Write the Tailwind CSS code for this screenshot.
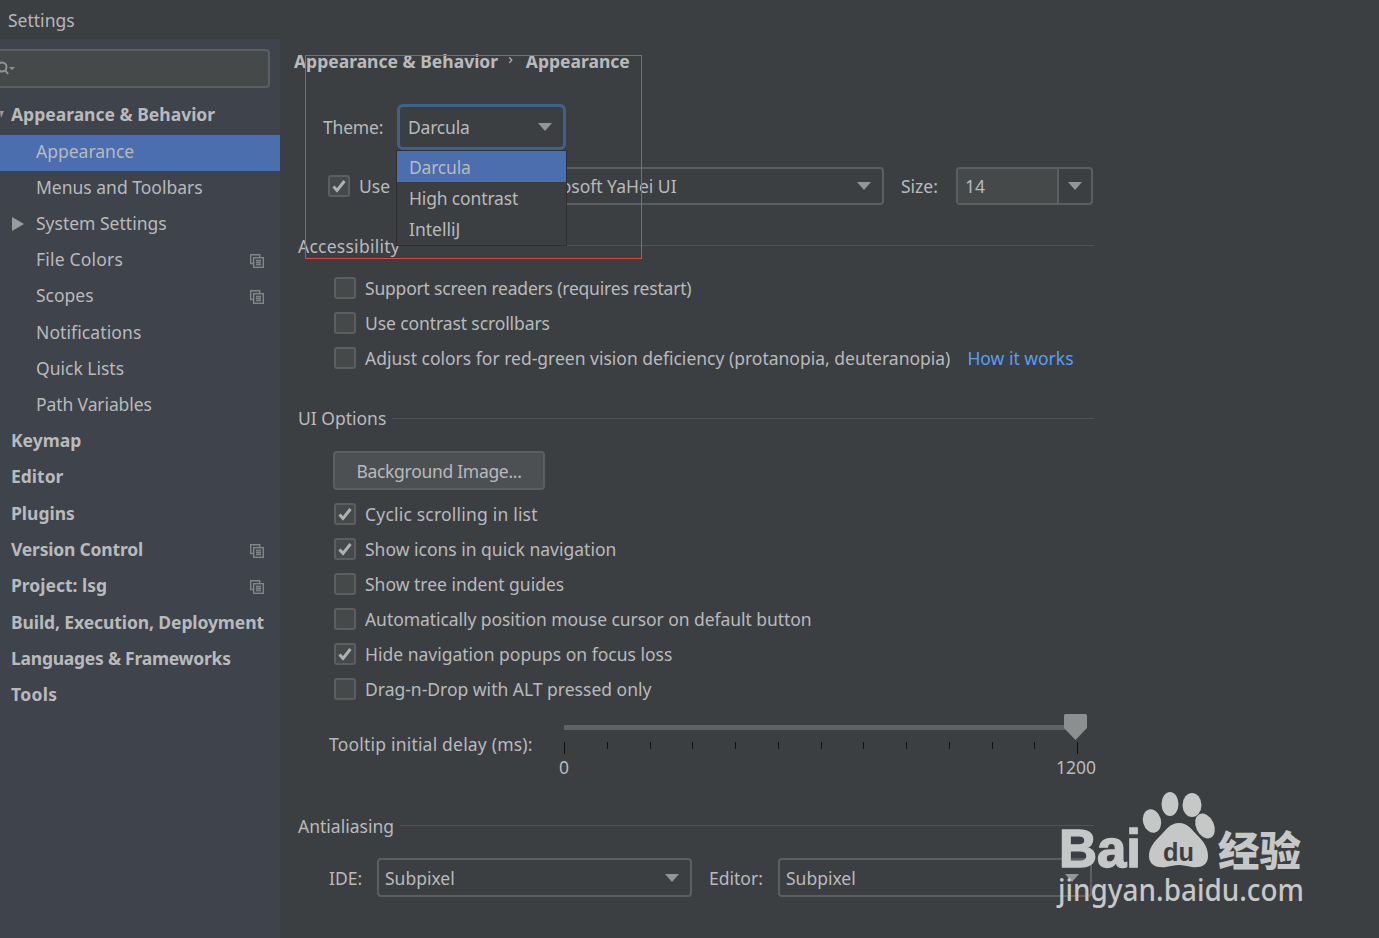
<!DOCTYPE html>
<html>
<head>
<meta charset="utf-8">
<script src="https://cdn.jsdelivr.net/npm/@tailwindcss/browser@4"></script>
</head>
<body class="m-0 bg-[#3c3f41]">
<div class="relative w-[1379px] h-[938px] overflow-hidden bg-[#3c3f41] text-[#b8babb] text-[17.5px] font-['Noto_Sans',sans-serif] leading-[24px]">
  <div class="h-[39px] pl-2 flex items-center text-[#b4b7b8]">Settings</div>
  <div class="flex h-[899px]">
    <!-- sidebar -->
    <aside class="w-[280px] shrink-0 bg-[#3e434c] pt-[10px] overflow-hidden">
      <div class="ml-[-10px] w-[280px] h-[39px] rounded-[4px] border-2 border-[#5c5f60] bg-[#45494a] flex items-center pl-[5px]">
        <svg width="20" height="16" viewBox="0 0 20 16"><circle cx="5" cy="6" r="4.5" fill="none" stroke="#8f9395" stroke-width="2"/><path d="M8 9l3 4" stroke="#8f9395" stroke-width="2"/><path d="M12 6h6l-3 3z" fill="#8f9395"/></svg>
      </div>
      <div class="mt-[9px] flex flex-col [&>div]:pb-[5px]">
        <div class="h-[38px] pl-[11px] flex items-center font-bold relative"><svg class="absolute left-0 top-[14px]" width="4" height="7" viewBox="0 0 4 7"><path d="M0 0h4L1 7z" fill="#9a9c9e"/></svg>Appearance &amp; Behavior</div>
        <div class="h-[36px] pl-[36px] flex items-center bg-[#4b6eaf]">Appearance</div>
        <div class="h-[36px] pl-[36px] flex items-center">Menus and Toolbars</div>
        <div class="h-[36px] pl-[12px] flex items-center"><svg class="mr-[12px] relative top-[1px]" width="12" height="14" viewBox="0 0 12 14"><path d="M0 0l12 7-12 7z" fill="#9a9c9e"/></svg>System Settings</div>
        <div class="h-[36px] pl-[36px] pr-[16px] flex items-center justify-between"><span class="tracking-[0.2px]">File Colors</span><svg class="relative top-[2px]" width="14" height="14" viewBox="0 0 14 14" fill="none" stroke="#81868a" stroke-width="1.4"><path d="M3.5 9.5H.7V.7h9v3"/><rect x="3.7" y="3.7" width="9.6" height="9.6"/><path d="M6 6.5h5M6 8.5h5M6 10.5h5"/></svg></div>
        <div class="h-[37px] pl-[36px] pr-[16px] flex items-center justify-between">Scopes<svg class="relative top-[2px]" width="14" height="14" viewBox="0 0 14 14" fill="none" stroke="#81868a" stroke-width="1.4"><path d="M3.5 9.5H.7V.7h9v3"/><rect x="3.7" y="3.7" width="9.6" height="9.6"/><path d="M6 6.5h5M6 8.5h5M6 10.5h5"/></svg></div>
        <div class="h-[36px] pl-[36px] flex items-center tracking-[0.1px]">Notifications</div>
        <div class="h-[36px] pl-[36px] flex items-center">Quick Lists</div>
        <div class="h-[36px] pl-[36px] flex items-center tracking-[-0.1px]">Path Variables</div>
        <div class="h-[36px] pl-[11px] flex items-center font-bold">Keymap</div>
        <div class="h-[37px] pl-[11px] flex items-center font-bold">Editor</div>
        <div class="h-[36px] pl-[11px] flex items-center font-bold">Plugins</div>
        <div class="h-[36px] pl-[11px] pr-[16px] flex items-center justify-between font-bold"><span class="tracking-[-0.2px]">Version Control</span><svg class="relative top-[2px]" width="14" height="14" viewBox="0 0 14 14" fill="none" stroke="#81868a" stroke-width="1.4"><path d="M3.5 9.5H.7V.7h9v3"/><rect x="3.7" y="3.7" width="9.6" height="9.6"/><path d="M6 6.5h5M6 8.5h5M6 10.5h5"/></svg></div>
        <div class="h-[37px] pl-[11px] pr-[16px] flex items-center justify-between font-bold">Project: lsg<svg class="relative top-[2px]" width="14" height="14" viewBox="0 0 14 14" fill="none" stroke="#81868a" stroke-width="1.4"><path d="M3.5 9.5H.7V.7h9v3"/><rect x="3.7" y="3.7" width="9.6" height="9.6"/><path d="M6 6.5h5M6 8.5h5M6 10.5h5"/></svg></div>
        <div class="h-[36px] pl-[11px] flex items-center font-bold whitespace-nowrap tracking-[-0.1px]">Build, Execution, Deployment</div>
        <div class="h-[36px] pl-[11px] flex items-center font-bold tracking-[-0.25px]">Languages &amp; Frameworks</div>
        <div class="h-[36px] pl-[11px] flex items-center font-bold tracking-[0.3px]">Tools</div>
      </div>
    </aside>
    <!-- main -->
    <main class="w-[800px] shrink-0 ml-[14px] flex flex-col">
      <div class="h-[24px] mt-[10px] flex items-center font-bold whitespace-nowrap">Appearance &amp; Behavior<span class="mx-[10px] text-[15px] font-normal relative top-[-3px]">›</span><span class="ml-[3px]">Appearance</span></div>
      <!-- theme -->
      <div class="mt-[31px] h-[46px] pl-[29px] flex items-center">
        <span class="w-[74px] tracking-[-0.2px]">Theme:</span>
        <div class="w-[169px] h-[46px] rounded-[6px] border-[3px] border-[#3e6389] flex items-center justify-between pl-[8px] pr-[11px] relative"><span class="tracking-[-0.2px]">Darcula</span><svg width="14" height="8" viewBox="0 0 14 8"><path d="M0 0h14L7 8z" fill="#939596"/></svg></div>
      </div>
      <!-- use row -->
      <div class="mt-[17px] h-[38px] flex items-center relative">
        <div class="ml-[34px] w-[22px] h-[22px] rounded-[3px] border-2 border-[#5c5f60] bg-[#45494a] flex items-center justify-center"><svg width="16" height="14" viewBox="0 0 16 14"><path d="M2.5 7.5l3.5 4L13.5 2" fill="none" stroke="#aeb0b1" stroke-width="3"/></svg></div>
        <span class="ml-[9px] w-[220px]">Use</span>
        <div class="absolute left-[220px] w-[370px] h-[38px] rounded-[4px] border-2 border-[#5c5f60] flex items-center justify-between pl-[9px] pr-[11px]"><span class="whitespace-nowrap">Microsoft YaHei UI</span><svg width="14" height="8" viewBox="0 0 14 8"><path d="M0 0h14L7 8z" fill="#939596"/></svg></div>
        <span class="absolute left-[607px]">Size:</span>
        <div class="absolute left-[662px] w-[137px] h-[38px] rounded-[4px] border-2 border-[#5c5f60] flex overflow-hidden">
          <div class="w-[101px] bg-[#45494a] border-r-2 border-[#5c5f60] pl-[7px] flex items-center">14</div>
          <div class="flex-1 flex items-center justify-center"><svg width="14" height="8" viewBox="0 0 14 8"><path d="M0 0h14L7 8z" fill="#939596"/></svg></div>
        </div>
      </div>
      <!-- accessibility -->
      <div class="mt-[29px] h-[24px] pl-[4px] flex items-center gap-[8px] leading-none"><span class="whitespace-nowrap relative top-[1px] tracking-[0.25px]">Accessibility</span><div class="flex-1 h-px bg-[#505355] relative top-[-1px]"></div></div>
      <div class="mt-[18px] flex flex-col gap-[11px] pl-[40px]">
        <div class="h-[24px] flex items-center gap-[9px]"><div class="w-[22px] h-[22px] rounded-[3px] border-2 border-[#5c5f60] bg-[#45494a]"></div><span class="tracking-[-0.2px]">Support screen readers (requires restart)</span></div>
        <div class="h-[24px] flex items-center gap-[9px]"><div class="w-[22px] h-[22px] rounded-[3px] border-2 border-[#5c5f60] bg-[#45494a]"></div><span class="tracking-[-0.1px]">Use contrast scrollbars</span></div>
        <div class="h-[24px] flex items-center gap-[9px] whitespace-nowrap"><div class="w-[22px] h-[22px] rounded-[3px] border-2 border-[#5c5f60] bg-[#45494a]"></div>Adjust colors for red-green vision deficiency (protanopia, deuteranopia)<span class="ml-[8px] text-[#589df6]">How it works</span></div>
      </div>
      <!-- UI options -->
      <div class="mt-[36px] h-[24px] pl-[4px] flex items-center gap-[6px]"><span>UI Options</span><div class="flex-1 h-px bg-[#505355]"></div></div>
      <div class="mt-[21px] ml-[39px] w-[212px] h-[39px] rounded-[4px] border-2 border-[#5c5f60] bg-[#4c5052] flex items-center justify-center tracking-[-0.3px]">Background Image...</div>
      <div class="mt-[12px] flex flex-col gap-[11px] pl-[40px]">
        <div class="h-[24px] flex items-center gap-[9px]"><div class="w-[22px] h-[22px] rounded-[3px] border-2 border-[#5c5f60] bg-[#45494a] flex items-center justify-center"><svg width="16" height="14" viewBox="0 0 16 14"><path d="M2.5 7.5l3.5 4L13.5 2" fill="none" stroke="#aeb0b1" stroke-width="3"/></svg></div><span class="tracking-[0.2px]">Cyclic scrolling in list</span></div>
        <div class="h-[24px] flex items-center gap-[9px]"><div class="w-[22px] h-[22px] rounded-[3px] border-2 border-[#5c5f60] bg-[#45494a] flex items-center justify-center"><svg width="16" height="14" viewBox="0 0 16 14"><path d="M2.5 7.5l3.5 4L13.5 2" fill="none" stroke="#aeb0b1" stroke-width="3"/></svg></div>Show icons in quick navigation</div>
        <div class="h-[24px] flex items-center gap-[9px]"><div class="w-[22px] h-[22px] rounded-[3px] border-2 border-[#5c5f60] bg-[#45494a]"></div>Show tree indent guides</div>
        <div class="h-[24px] flex items-center gap-[9px]"><div class="w-[22px] h-[22px] rounded-[3px] border-2 border-[#5c5f60] bg-[#45494a]"></div><span class="tracking-[-0.06px]">Automatically position mouse cursor on default button</span></div>
        <div class="h-[24px] flex items-center gap-[9px]"><div class="w-[22px] h-[22px] rounded-[3px] border-2 border-[#5c5f60] bg-[#45494a] flex items-center justify-center"><svg width="16" height="14" viewBox="0 0 16 14"><path d="M2.5 7.5l3.5 4L13.5 2" fill="none" stroke="#aeb0b1" stroke-width="3"/></svg></div>Hide navigation popups on focus loss</div>
        <div class="h-[24px] flex items-center gap-[9px]"><div class="w-[22px] h-[22px] rounded-[3px] border-2 border-[#5c5f60] bg-[#45494a]"></div>Drag-n-Drop with ALT pressed only</div>
      </div>
      <!-- slider -->
      <div class="mt-[15px] ml-[35px] flex">
        <span class="w-[235px] mt-[16px] shrink-0 whitespace-nowrap h-[24px] tracking-[0.2px]">Tooltip initial delay (ms):</span>
        <div class="w-[514px] flex flex-col">
          <div class="h-[26px] flex items-center relative">
            <div class="w-[502px] h-[5px] bg-[#616263] relative top-[-2px]"></div>
            <svg class="absolute left-[500px] top-[-2px]" width="23" height="26" viewBox="0 0 23 26"><path d="M0 1.5Q0 0 1.5 0h20Q23 0 23 1.5V14L11.5 26 0 14z" fill="#8b8f90"/></svg>
          </div>
          <div class="h-[12px] flex justify-between items-start">
            <div class="w-px h-[12px] bg-[#111]"></div><div class="w-px h-[7px] bg-[#111]"></div><div class="w-px h-[7px] bg-[#111]"></div><div class="w-px h-[7px] bg-[#111]"></div><div class="w-px h-[7px] bg-[#111]"></div><div class="w-px h-[7px] bg-[#111]"></div><div class="w-px h-[7px] bg-[#111]"></div><div class="w-px h-[7px] bg-[#111]"></div><div class="w-px h-[7px] bg-[#111]"></div><div class="w-px h-[7px] bg-[#111]"></div><div class="w-px h-[7px] bg-[#111]"></div><div class="w-px h-[7px] bg-[#111]"></div><div class="w-px h-[12px] bg-[#111]"></div>
          </div>
          <div class="mt-[1px] h-[24px] flex justify-between ml-[-5px] mr-[-18px]"><span>0</span><span>1200</span></div>
        </div>
      </div>
      <!-- antialiasing -->
      <div class="mt-[35px] h-[24px] pl-[4px] flex items-center gap-[6px]"><span>Antialiasing</span><div class="flex-1 h-px bg-[#505355] relative top-[-1px]"></div></div>
      <div class="mt-[20px] h-[39px] pl-[35px] flex items-center">
        <span class="w-[48px]">IDE:</span>
        <div class="w-[315px] h-[39px] rounded-[4px] border-2 border-[#5c5f60] flex items-center justify-between pl-[6px] pr-[11px]">Subpixel<svg width="14" height="8" viewBox="0 0 14 8"><path d="M0 0h14L7 8z" fill="#939596"/></svg></div>
        <span class="ml-[17px] w-[69px]">Editor:</span>
        <div class="w-[314px] h-[39px] rounded-[4px] border-2 border-[#5c5f60] flex items-center justify-between pl-[6px] pr-[11px]">Subpixel<svg width="14" height="8" viewBox="0 0 14 8"><path d="M0 0h14L7 8z" fill="#939596"/></svg></div>
      </div>
    </main>
  </div>

  <!-- theme popup -->
  <div class="absolute left-[396px] top-[150px] w-[171px] h-[96px] bg-[#3c3f41] border border-[#2e3030] flex flex-col">
    <div class="h-[31px] pl-[12px] flex items-center bg-[#4b6eaf] tracking-[-0.2px]">Darcula</div>
    <div class="h-[31px] pl-[12px] flex items-center tracking-[-0.15px]">High contrast</div>
    <div class="h-[31px] pl-[12px] flex items-center">IntelliJ</div>
  </div>
  <!-- red annotation -->
  <div class="absolute left-[305px] top-[55px] w-[337px] h-[204px] border border-[#e8413f] pointer-events-none"></div>
  <!-- watermark -->
  <svg class="absolute left-[1050px] top-[785px]" width="329" height="130" viewBox="0 0 329 130">
    <g fill="#c6c8c7">
      <text x="9" y="82" font-family="Liberation Sans" font-weight="700" font-size="54" textLength="82" lengthAdjust="spacingAndGlyphs" stroke="#c6c8c7" stroke-width="1.5">Bai</text>
      <ellipse cx="120" cy="19" rx="8.5" ry="12"/>
      <ellipse cx="142" cy="20" rx="9.5" ry="12"/>
      <ellipse cx="102" cy="36" rx="9" ry="12" transform="rotate(-15 102 36)"/>
      <ellipse cx="155" cy="41" rx="9" ry="13" transform="rotate(-25 155 41)"/>
      <path d="M129 38c9 0 13 7 19 13 6 6 10 12 10 20 0 10-8 12-16 11-5-1-9-2-13-2s-8 1-13 2c-8 1-17-1-17-11 0-8 5-14 11-20 6-6 10-13 19-13z"/>
      <text x="113" y="76" font-family="Liberation Sans" font-weight="700" font-size="26" fill="#3c3f41" textLength="31" lengthAdjust="spacingAndGlyphs">du</text>
      <text x="168" y="81" font-family="Noto Sans CJK SC" font-weight="900" font-size="41" textLength="83" lengthAdjust="spacingAndGlyphs">经验</text>
      <text x="8" y="116" font-family="Noto Sans" font-weight="500" font-size="30" textLength="246" lengthAdjust="spacingAndGlyphs">jingyan.baidu.com</text>
    </g>
  </svg>
</div>
</body>
</html>
